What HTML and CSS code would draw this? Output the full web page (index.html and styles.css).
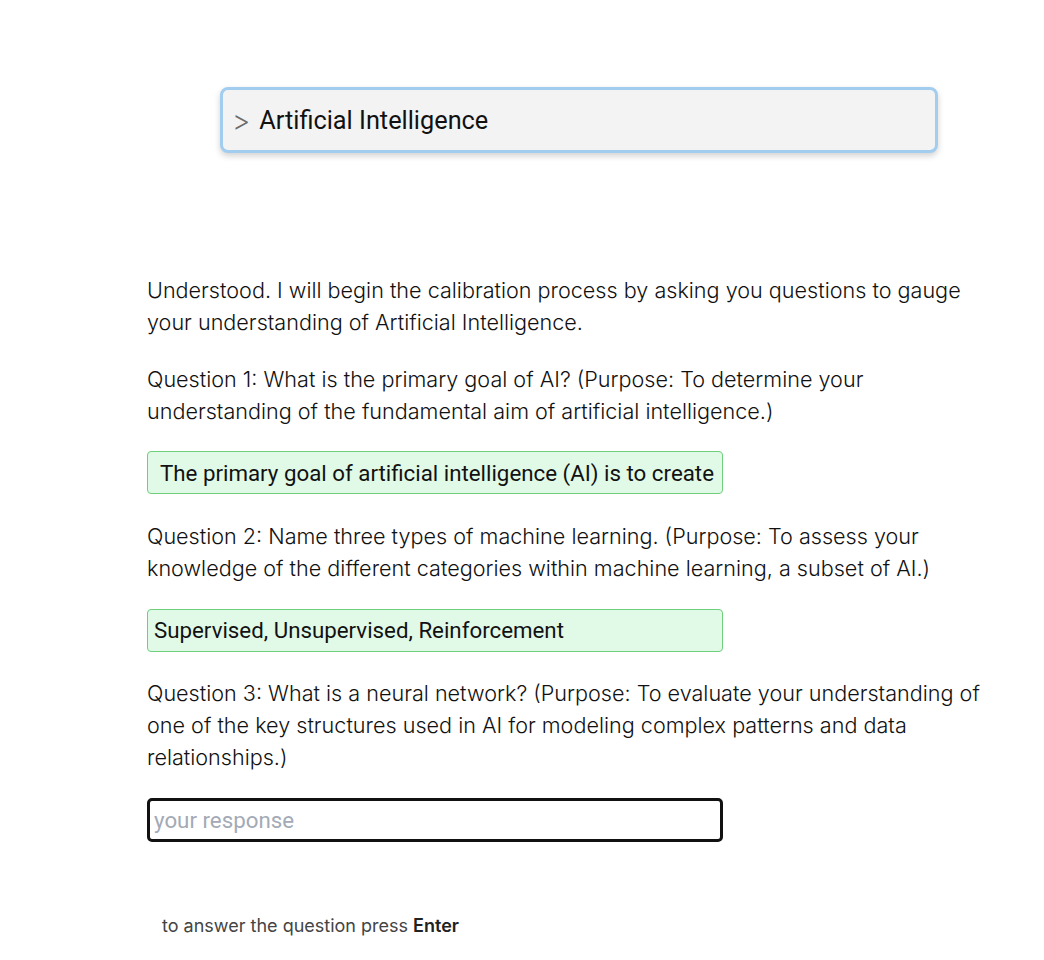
FILE: index.html
```html
<!DOCTYPE html>
<html lang="en">
<head>
<meta charset="utf-8">
<title>Calibration</title>
<link rel="stylesheet" href="styles.css">
</head>
<body>
<div class="page">
  <div class="topic">
    <span class="chev">&gt;</span>
    <span class="topic-text">Artificial Intelligence</span>
  </div>
  <div class="chat">
    <p class="msg">Understood. I will begin the calibration process by asking you questions to gauge your understanding of Artificial Intelligence.</p>
    <p class="msg">Question 1: What is the primary goal of AI? (Purpose: To determine your understanding of the fundamental aim of artificial intelligence.)</p>
    <div class="answer answer-wide">The primary goal of artificial intelligence (AI) is to create</div>
    <p class="msg">Question 2: Name three types of machine learning. (Purpose: To assess your knowledge of the different categories within machine learning, a subset of AI.)</p>
    <div class="answer">Supervised, Unsupervised, Reinforcement</div>
    <p class="msg">Question 3: What is a neural network? (Purpose: To evaluate your understanding of one of the key structures used in AI for modeling complex patterns and data relationships.)</p>
    <input class="response" type="text" placeholder="your response" autofocus>
    <div class="hint">to answer the question press <b>Enter</b></div>
  </div>
</div>
</body>
</html>
```
FILE: styles.css
```css
html, body {
  margin: 0;
  padding: 0;
  background: #ffffff;
}
.page {
  padding-top: 87px;
}
.topic {
  box-sizing: border-box;
  margin-left: 220px;
  width: 718px;
  height: 66px;
  background: #f3f3f3;
  border: 3px solid #a3cdee;
  border-radius: 8px;
  box-shadow: 0 3px 6px rgba(0, 0, 0, 0.18);
  display: flex;
  align-items: center;
  padding-left: 9px;
  font-family: Roboto, "Liberation Sans", sans-serif;
  font-size: 25.3px;
  color: #111;
}
.chev {
  color: #6b6b6b;
  margin-right: 9px;
  font-family: Inter, "Noto Sans", sans-serif;
  font-weight: 300;
  font-size: 28px;
  line-height: 1;
  position: relative;
  top: 1px;
}
.chat {
  margin-left: 147px;
  width: 850px;
  padding-top: 121px;
}
.msg {
  margin: 0 0 24px 0;
  font-family: Inter, "Noto Sans", sans-serif;
  font-weight: 300;
  font-size: 21.6px;
  line-height: 32.3px;
  color: #111;
}
.answer {
  box-sizing: border-box;
  width: 576px;
  height: 43px;
  background: #e1f9e7;
  border: 1px solid #6fcf7c;
  border-radius: 4px;
  display: flex;
  align-items: center;
  padding-left: 6px;
  margin-bottom: 25px;
  font-family: Roboto, "Liberation Sans", sans-serif;
  font-size: 22.3px;
  color: #111;
  white-space: nowrap;
  overflow: hidden;
}
.answer-wide {
  padding-left: 12px;
  margin-bottom: 26px;
}
.response {
  display: block;
  box-sizing: border-box;
  width: 576px;
  height: 44px;
  margin: 0;
  border: 3px solid #111;
  border-radius: 5px;
  padding: 0 4px;
  font-family: Roboto, "Liberation Sans", sans-serif;
  font-size: 22.3px;
  color: #111;
  background: #fff;
  outline: none;
}
.response::placeholder {
  color: #a3aab6;
}
.hint {
  margin-top: 73px;
  margin-left: 15px;
  font-family: Inter, "Noto Sans", sans-serif;
  font-size: 18px;
  color: #444;
}
.hint b {
  font-weight: 600;
  color: #222;
}
```
